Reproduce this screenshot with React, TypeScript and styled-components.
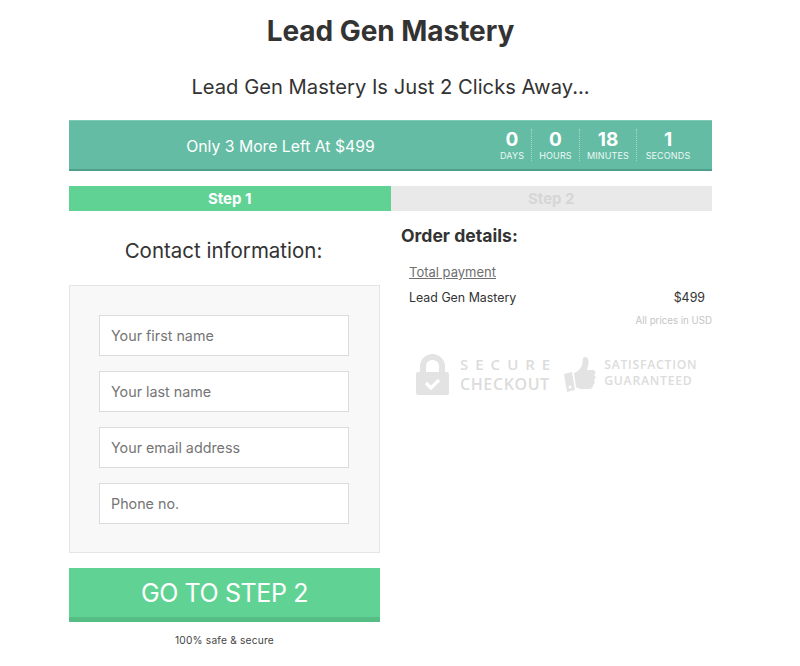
import React from 'react'
import styled, { createGlobalStyle } from 'styled-components'

const GlobalStyle = createGlobalStyle`
    html, body {
        margin: 0;
        padding: 0;
        background: #fff;
        font-family: 'Inter', 'Liberation Sans', sans-serif;
        color: #333;
    }
`

const Page = styled.div`
    width: 643px;
    margin-left: 69px;
    height: 666px;
    overflow: hidden;
`

const Title = styled.h1`
    margin: 0;
    padding-top: 14px;
    font-size: 28px;
    line-height: 34px;
    font-weight: 700;
    letter-spacing: -0.05px;
    text-align: center;
    color: #333;
`

const Subtitle = styled.h2`
    margin: 0;
    padding-top: 25px;
    font-size: 20.2px;
    line-height: 28px;
    font-weight: 400;
    text-align: center;
    color: #333;
`

const Banner = styled.div`
    margin-top: 19px;
    height: 51px;
    box-sizing: border-box;
    display: flex;
    align-items: center;
    background: #64bca4;
    border-top: 1px solid #7fc9b5;
    border-bottom: 2px solid #4fa08a;
`

const BannerText = styled.div`
    width: 423px;
    margin-right: 1px;
    padding-top: 2px;
    text-align: center;
    font-size: 15.75px;
    color: #fff;
`

const Counter = styled.div`
    display: flex;
    height: 32px;
`

const CounterCell = styled.div<{ $w: number; $last?: boolean }>`
    width: ${(p) => p.$w}px;
    box-sizing: border-box;
    padding-top: 1px;
    text-align: center;
    color: #fff;
    border-right: ${(p) => (p.$last ? 'none' : '1px dotted #a4d8ca')};
`

const CounterNum = styled.div`
    font-size: 19px;
    line-height: 20px;
    font-weight: 700;
`

const CounterLabel = styled.div`
    font-size: 9px;
    line-height: 11px;
    letter-spacing: 0.15px;
    color: #eef8f5;
`

const Steps = styled.div`
    margin-top: 15px;
    display: flex;
    height: 25px;
`

const Step = styled.div<{ $active?: boolean }>`
    flex: 1;
    text-align: center;
    font-size: 15px;
    line-height: 25px;
    font-weight: 700;
    color: ${(p) => (p.$active ? '#fff' : '#d6d6d6')};
    background: ${(p) => (p.$active ? '#60d394' : '#e9e9e9')};
`

const Columns = styled.div`
    margin-top: 15px;
    display: grid;
    grid-template-columns: 311px 311px;
    column-gap: 21px;
`

const ContactHeading = styled.h3`
    margin: 0;
    padding: 10px 2px 0 0;
    font-size: 20.5px;
    line-height: 30px;
    font-weight: 400;
    text-align: center;
    color: #333;
`

const FormBox = styled.div`
    margin-top: 19px;
    height: 268px;
    box-sizing: border-box;
    padding: 29px 30px 0 29px;
    display: flex;
    flex-direction: column;
    gap: 15px;
    background: #f8f8f8;
    border: 1px solid #e5e5e5;
`

const Field = styled.input`
    display: block;
    width: 100%;
    height: 41px;
    box-sizing: border-box;
    padding: 0 11px 1px;
    background: #fff;
    border: 1px solid #dcdcdc;
    border-radius: 0;
    font-family: inherit;
    font-size: 14.3px;
    &::placeholder {
        color: #757575;
        opacity: 1;
    }
`

const GoButton = styled.button`
    display: block;
    width: 100%;
    margin-top: 15px;
    height: 54px;
    box-sizing: border-box;
    padding: 1px 0 0;
    background: #60d394;
    border: none;
    border-bottom: 5px solid #56bd85;
    font-family: inherit;
    font-size: 25px;
    font-weight: 400;
    letter-spacing: -0.4px;
    color: #fff;
`

const SafeNote = styled.div`
    margin-top: 12px;
    text-align: center;
    font-size: 10.2px;
    line-height: 13px;
    letter-spacing: 0.2px;
    color: #444;
`

const OrderHeading = styled.h3`
    margin: 0;
    font-size: 17.6px;
    line-height: 20px;
    font-weight: 700;
    color: #333;
`

const TotalLabel = styled.div`
    margin: 17px 0 0 8px;
    font-size: 13px;
    line-height: 18px;
    color: #6f6f6f;
    text-decoration: underline;
`

const OrderRow = styled.div`
    margin-top: 8px;
    padding: 0 7px 0 8px;
    display: flex;
    justify-content: space-between;
    font-size: 12.4px;
    line-height: 18px;
    color: #333;
`

const PriceNote = styled.div`
    margin-top: 7px;
    text-align: right;
    font-size: 9.7px;
    line-height: 13px;
    color: #c4c4c4;
`

const Badges = styled.div`
    margin-top: 27px;
    padding-left: 15px;
    display: flex;
    align-items: center;
`

const BadgeText = styled.div`
    margin-left: 11px;
    font-family: 'Open Sans', 'Liberation Sans', sans-serif;
    font-weight: 600;
    color: #dcdcdc;
`

const GuaranteeText = styled(BadgeText)`
    margin-left: 8px;
    margin-bottom: 3px;
`

const SecureTop = styled.div`
    font-size: 15px;
    line-height: 19px;
    letter-spacing: 7px;
    white-space: nowrap;
`

const SecureBottom = styled.div`
    font-size: 16px;
    line-height: 20px;
    letter-spacing: 0.6px;
`

const GuaranteeLine = styled.div`
    font-size: 12.2px;
    line-height: 16px;
    letter-spacing: 0.75px;
    white-space: nowrap;
`

const ThumbWrap = styled.div`
    margin-left: 7px;
    display: flex;
`

const fields = ['Your first name', 'Your last name', 'Your email address', 'Phone no.']

const counter = [
    { num: '0', label: 'DAYS', w: 39 },
    { num: '0', label: 'HOURS', w: 48 },
    { num: '18', label: 'MINUTES', w: 57 },
    { num: '1', label: 'SECONDS', w: 62, last: true },
]

function LockIcon() {
    return (
        <svg width="33" height="41" viewBox="0 0 33 41">
            <path
                d="M4 19V12C4 5 10 0 16.5 0S29 5 29 12v7h-6v-7c0-3.500-3-6-6.500-6S10 8.500 10 12v7z"
                fill="#e3e3e3"
            />
            <rect x="0" y="18" width="33" height="23" rx="2" fill="#e3e3e3" />
            <path d="M10 29l5 5 8-8" fill="none" stroke="#fff" strokeWidth="3.2" />
        </svg>
    )
}

function ThumbIcon() {
    return (
        <svg width="32" height="35" viewBox="0 0 32 35">
            <path d="M0 17l8-2 3 18-8 2z" fill="#e3e3e3" />
            <circle cx="6" cy="30" r="1.5" fill="#fff" />
            <path
                d="M10 16c4-1 7-5 8-8 1-3 0-8 3-8 4 0 4 5 3 9l-1 4h6c3 0 3 4 1 5 2 1 2 4 0 5 1 2 1 4-1 5 0 3-2 4-4 4H18c-3 0-4-1-6-2z"
                fill="#e3e3e3"
            />
        </svg>
    )
}

export default function App() {
    return (
        <>
            <GlobalStyle />
            <Page>
                <Title>Lead Gen Mastery</Title>
                <Subtitle>Lead Gen Mastery Is Just 2 Clicks Away...</Subtitle>
                <Banner>
                    <BannerText>Only 3 More Left At $499</BannerText>
                    <Counter>
                        {counter.map((c) => (
                            <CounterCell key={c.label} $w={c.w} $last={c.last}>
                                <CounterNum>{c.num}</CounterNum>
                                <CounterLabel>{c.label}</CounterLabel>
                            </CounterCell>
                        ))}
                    </Counter>
                </Banner>
                <Steps>
                    <Step $active>Step 1</Step>
                    <Step>Step 2</Step>
                </Steps>
                <Columns>
                    <div>
                        <ContactHeading>Contact information:</ContactHeading>
                        <FormBox>
                            {fields.map((f) => (
                                <Field key={f} placeholder={f} />
                            ))}
                        </FormBox>
                        <GoButton>GO TO STEP 2</GoButton>
                        <SafeNote>100% safe &amp; secure</SafeNote>
                    </div>
                    <div>
                        <OrderHeading>Order details:</OrderHeading>
                        <TotalLabel>Total payment</TotalLabel>
                        <OrderRow>
                            <span>Lead Gen Mastery</span>
                            <span>$499</span>
                        </OrderRow>
                        <PriceNote>All prices in USD</PriceNote>
                        <Badges>
                            <LockIcon />
                            <BadgeText>
                                <SecureTop>SECURE</SecureTop>
                                <SecureBottom>CHECKOUT</SecureBottom>
                            </BadgeText>
                            <ThumbWrap>
                                <ThumbIcon />
                            </ThumbWrap>
                            <GuaranteeText>
                                <GuaranteeLine>SATISFACTION</GuaranteeLine>
                                <GuaranteeLine>GUARANTEED</GuaranteeLine>
                            </GuaranteeText>
                        </Badges>
                    </div>
                </Columns>
            </Page>
        </>
    )
}
